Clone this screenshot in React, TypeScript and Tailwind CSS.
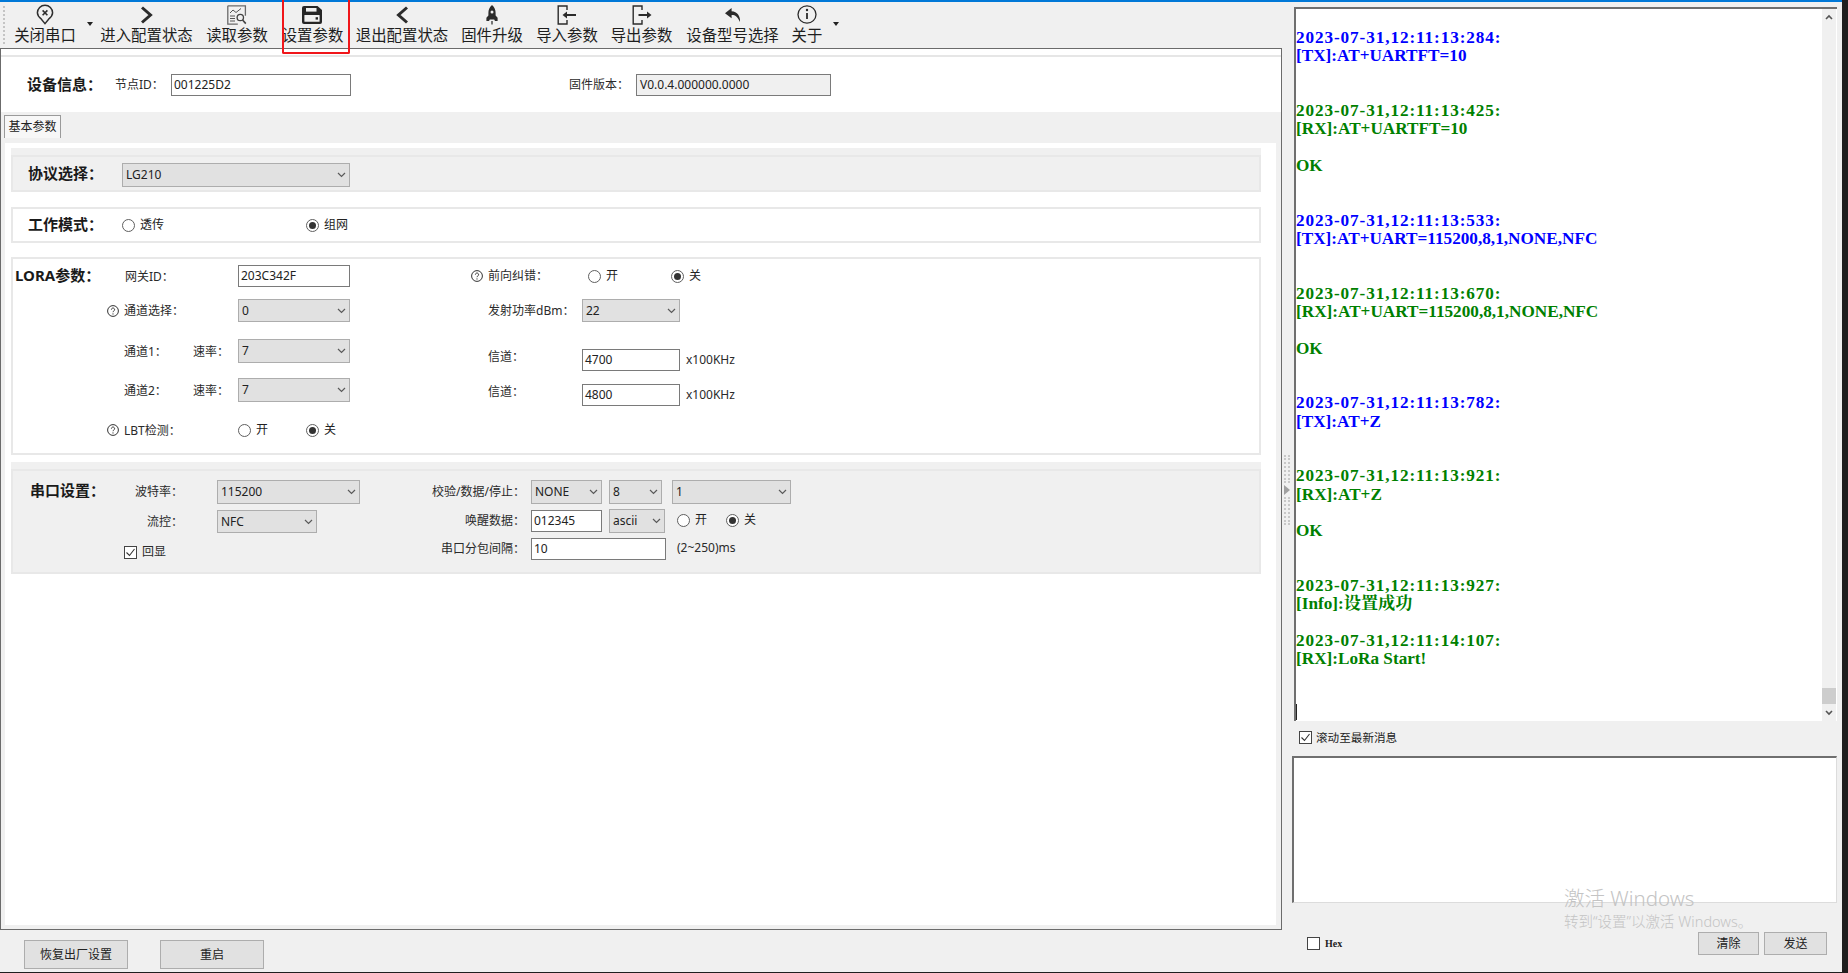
import React from "react";

const Chevron = ({ className = "" }: { className?: string }) => (
  <svg width="9" height="6" viewBox="0 0 9 6" className={className} fill="none" stroke="#5a5a5a" strokeWidth="1.2">
    <path d="M1 1l3.5 3.5L8 1" />
  </svg>
);

const Select = ({ value, className = "" }: { value: string; className?: string }) => (
  <div className={`flex items-center justify-between bg-[#e1e1e1] border border-[#adadad] pl-[3px] pr-[3px] text-[12px] leading-none text-[#222] shrink-0 ${className}`}>
    <span>{value}</span>
    <Chevron />
  </div>
);

const Field = ({ value, className = "", readOnly }: { value: string; className?: string; readOnly?: boolean }) => (
  <div className={`flex items-center border border-[#7a7a7a] pl-[2px] text-[12px] leading-none text-[#222] shrink-0 h-[22px] ${readOnly ? "bg-[#f0f0f0]" : "bg-white"} ${className}`}>
    {value}
  </div>
);

const Radio = ({ checked, label, className = "" }: { checked?: boolean; label: string; className?: string }) => (
  <div className={`flex items-center shrink-0 gap-[5px] text-[12px] leading-none text-[#222] ${className}`}>
    <span className="flex items-center justify-center w-[13px] h-[13px] rounded-full border border-[#5f5f5f] bg-white">
      {checked && <span className="block w-[7px] h-[7px] rounded-full bg-[#333]" />}
    </span>
    <span>{label}</span>
  </div>
);

const Check = ({ checked }: { checked?: boolean }) => (
  <span className="flex items-center justify-center w-[13px] h-[13px] border border-[#444] bg-white shrink-0">
    {checked && (
      <svg width="11" height="11" viewBox="0 0 11 11" fill="none" stroke="#333" strokeWidth="1.1">
        <path d="M1.5 5.5l3 3 5-6.5" />
      </svg>
    )}
  </span>
);

const Help = ({ className = "" }: { className?: string }) => (
  <svg width="12" height="12" viewBox="0 0 12 12" fill="none" stroke="#333" className={`shrink-0 ${className}`}>
    <circle cx="6" cy="6" r="5.4" strokeWidth="1" />
    <path d="M4.4 4.6a1.6 1.6 0 1 1 2.4 1.4c-.6.3-.8.7-.8 1.2" strokeWidth="1" />
    <circle cx="6" cy="8.900" r="0.6" fill="#333" stroke="none" />
  </svg>
);

const PinX = () => (
  <svg width="18" height="21" viewBox="0 0 18 21" fill="none" stroke="#2f2f2f" strokeWidth="1.5">
    <path d="M9 1.2a7.6 7.6 0 0 1 7.6 7.6c0 3-2.2 5-4 6.4L9 19.6l-3.6-4.4c-1.8-1.4-4-3.4-4-6.4A7.6 7.6 0 0 1 9 1.2z" />
    <path d="M6.6 6.4l4.8 4.8M11.4 6.4l-4.8 4.8" strokeWidth="1.6" />
  </svg>
);
const ChevR = () => (
  <svg width="13" height="18" viewBox="0 0 13 18" fill="none" stroke="#2b2b2b" strokeWidth="3">
    <path d="M2 1.5L10.5 9 2 16.5" />
  </svg>
);
const ChevL = () => (
  <svg width="13" height="18" viewBox="0 0 13 18" fill="none" stroke="#2b2b2b" strokeWidth="3">
    <path d="M11 1.5L2.5 9l8.5 7.5" />
  </svg>
);
const DocChart = () => (
  <svg width="20" height="20" viewBox="0 0 20 20" fill="none" stroke="#6a6a6a" strokeWidth="1">
    <path d="M.8 .8h17.6v10M.8 .8v18.4h10" strokeWidth="1.3" />
    <path d="M3 8l3-3 3 2.5 5-4" stroke="#555" />
    <path d="M3 11h5M3 13.5h5M3 16h5" stroke="#555" />
    <circle cx="13.3" cy="12.5" r="3.2" stroke="#444" strokeWidth="1.3" />
    <path d="M15.6 15l3.2 3.6" stroke="#444" strokeWidth="1.6" />
  </svg>
);
const Save = () => (
  <svg width="20" height="18" viewBox="0 0 20 18" className="-ml-[2px]">
    <path d="M2 0h13.5L20 4v12a2 2 0 0 1-2 2H2a2 2 0 0 1-2-2V2a2 2 0 0 1 2-2z" fill="#262626" />
    <rect x="4" y="2" width="10.5" height="3.6" fill="#f0f0f0" />
    <rect x="2.4" y="9" width="15.2" height="6.8" rx="0.6" fill="#f0f0f0" />
    <rect x="13.6" y="11.2" width="2.4" height="2.4" fill="#262626" />
  </svg>
);
const Rocket = () => (
  <svg width="12" height="20" viewBox="0 0 12 20">
    <path d="M6 0c2.6 2 3.6 5 3.6 8v2.6l2 2.2V16H9l-.8-1.4H3.800L3 16H.4v-3.200l2-2.200V8C2.4 5 3.400 2 6 0z" fill="#2b2b2b" />
    <circle cx="6" cy="7" r="1.5" fill="#f0f0f0" />
    <path d="M5.200 16h1.600v3.600H5.200z" fill="#555" />
  </svg>
);
const Door = ({ out }: { out?: boolean }) => (
  <svg width="20" height="20" viewBox="0 0 20 20" fill="none" stroke="#2b2b2b">
    <path d="M10 5V1H1.2v18H10v-4" strokeWidth="1.4" />
    {out ? (
      <>
        <path d="M6.5 10H16" strokeWidth="2" />
        <path d="M15 6.5l4.5 3.5-4.5 3.500z" fill="#2b2b2b" stroke="none" />
      </>
    ) : (
      <>
        <path d="M9 10h10" strokeWidth="2" />
        <path d="M10 6.5L5.500 10l4.500 3.500z" fill="#2b2b2b" stroke="none" />
      </>
    )}
  </svg>
);
const Reply = () => (
  <svg width="16" height="14" viewBox="0 0 16 14">
    <path d="M6.6 0L0 5.2l6.6 5V7c3.200-.2 6 1.600 8.400 7 .6-5.800-2.800-10.600-8.400-10.800z" fill="#2b2b2b" />
  </svg>
);
const Info = () => (
  <svg width="20" height="19" viewBox="0 0 20 19" fill="none" stroke="#2b2b2b">
    <ellipse cx="10" cy="9.500" rx="9" ry="8.700" strokeWidth="1.3" />
    <path d="M10 8v6" strokeWidth="1.8" />
    <circle cx="10" cy="5" r="1.200" fill="#2b2b2b" stroke="none" />
  </svg>
);

const Tool = ({ icon, label, className = "", children }: { icon: React.ReactNode; label: string; className?: string; children?: React.ReactNode }) => (
  <div className={`relative flex flex-col items-center shrink-0 ${className}`}>
    <div className="h-[25px] flex items-center justify-center">{icon}</div>
    <div className="whitespace-nowrap text-[15.4px] leading-[18px] text-[#1e1e1e]">{label}</div>
    {children}
  </div>
);

const Caret = ({ className = "" }: { className?: string }) => (
  <svg width="6" height="4" viewBox="0 0 6 4" className={`shrink-0 mt-[20px] ${className}`}>
    <path d="M0 0h6L3 4z" fill="#222" />
  </svg>
);

const H = ({ children, className = "" }: { children: React.ReactNode; className?: string }) => (
  <div className={`shrink-0 whitespace-nowrap text-[15px] font-bold leading-none text-[#1a1a1a] ${className}`}>{children}</div>
);
const L = ({ children, className = "" }: { children: React.ReactNode; className?: string }) => (
  <div className={`shrink-0 whitespace-nowrap text-[12px] leading-none text-[#2a2a2a] ${className}`}>{children}</div>
);

type Tone = "b" | "g" | "";
const D = "2023-07-31,12:11:";
const log: [string, Tone][] = [
  [D + "13:284:", "b"], ["[TX]:AT+UARTFT=10", "b"], ["", ""], ["", ""],
  [D + "13:425:", "g"], ["[RX]:AT+UARTFT=10", "g"], ["", ""], ["OK", "g"], ["", ""], ["", ""],
  [D + "13:533:", "b"], ["[TX]:AT+UART=115200,8,1,NONE,NFC", "b"], ["", ""], ["", ""],
  [D + "13:670:", "g"], ["[RX]:AT+UART=115200,8,1,NONE,NFC", "g"], ["", ""], ["OK", "g"], ["", ""], ["", ""],
  [D + "13:782:", "b"], ["[TX]:AT+Z", "b"], ["", ""], ["", ""],
  [D + "13:921:", "g"], ["[RX]:AT+Z", "g"], ["", ""], ["OK", "g"], ["", ""], ["", ""],
  [D + "13:927:", "g"], ["[Info]:设置成功", "g"], ["", ""],
  [D + "14:107:", "g"], ["[RX]:LoRa Start!", "g"],
];

export default function App() {
  return (
    <div className="w-[1848px] h-[973px] bg-[#1f1f1f] overflow-hidden [font-family:'Noto_Sans','Noto_Sans_CJK_SC',sans-serif]">
      <div className="w-[1842px] h-[972px] bg-[#f0f0f0] border-t-2 border-[#0078d7] flex">
        {/* left column */}
        <div className="w-[1282px] shrink-0 flex flex-col">
          {/* toolbar */}
          <div className="h-[46px] flex items-start shrink-0">
            <div className="ml-[3px] mt-[4px] w-[2px] h-[38px] border-l-2 border-dotted border-[#c4c4c4] shrink-0" />
            <Tool className="ml-[9px] w-[62px]" icon={<PinX />} label="关闭串口" />
            <Caret className="ml-[11px]" />
            <Tool className="ml-[7px] w-[93px]" icon={<ChevR />} label="进入配置状态" />
            <Tool className="ml-[13px] w-[62px]" icon={<DocChart />} label="读取参数" />
            <Tool className="ml-[14px] w-[61px]" icon={<Save />} label="设置参数">
              <div className="absolute left-[0px] top-[-2px] w-[68px] h-[54px] border-2 border-t-0 border-[#f0161a] rounded-b-[2px]" />
            </Tool>
            <Tool className="ml-[13px] w-[92px]" icon={<ChevL />} label="退出配置状态" />
            <Tool className="ml-[13px] w-[62px]" icon={<Rocket />} label="固件升级" />
            <Tool className="ml-[13px] w-[62px]" icon={<Door />} label="导入参数" />
            <Tool className="ml-[13px] w-[61px]" icon={<Door out />} label="导出参数" />
            <Tool className="ml-[15px] w-[91px]" icon={<Reply />} label="设备型号选择" />
            <Tool className="ml-[14px] w-[30px]" icon={<Info />} label="关于" />
            <Caret className="ml-[11px]" />
          </div>

          {/* main panel */}
          <div className="h-[882px] shrink-0 border border-[#6b6b6b] bg-[#f0f0f0] flex flex-col">
            <div className="h-[8px] bg-white border-b-2 border-[#e6e6e6] shrink-0" />
            <div className="h-[55px] bg-white flex items-center shrink-0 pl-[26px]">
              <H className="w-[88px]">设备信息：</H>
              <L className="w-[56px]">节点ID：</L>
              <Field value="001225D2" className="w-[180px]" />
              <L className="ml-[218px] w-[67px]">固件版本：</L>
              <Field value="V0.0.4.000000.0000" className="w-[195px] pl-[3px]" readOnly />
            </div>
            <div className="h-[31px] shrink-0 pl-[3px] pt-[3px]">
              <div className="w-[57px] h-[23px] flex items-center justify-center border-l border-t border-r border-[#9a9a9a] bg-[#f7f7f7] text-[12px] leading-none text-[#222]">
                基本参数
              </div>
            </div>

            {/* tab page */}
            <div className="ml-[4px] w-[1271px] h-[782px] bg-white pl-[6px] shrink-0">
              <div className="w-[1250px] pt-[5px]">
                <div className="h-[7px] bg-[#f0f0f0]" />
                {/* protocol */}
                <div className="h-[37px] border-2 border-[#e8e8e8] bg-[#f0f0f0] flex items-center pl-[15px]">
                  <H className="w-[94px]">协议选择：</H>
                  <Select value="LG210" className="w-[228px] h-[24px] mt-[2px]" />
                </div>
                {/* mode */}
                <div className="mt-[15px] h-[36px] border-2 border-[#e8e8e8] flex items-center pl-[15px]">
                  <H className="w-[94px] -mt-[1px]">工作模式：</H>
                  <Radio label="透传" className="w-[184px]" />
                  <Radio label="组网" checked />
                </div>
                {/* lora */}
                <div className="mt-[14px] h-[198px] border-2 border-[#e8e8e8] flex pt-[6px]">
                  <div className="w-[337px] shrink-0 flex flex-col">
                    <div className="h-[22px] flex items-center pl-[2px]">
                      <H className="w-[110px] -mt-[2px]">LORA参数：</H>
                      <L className="w-[113px] mt-[2px]">网关ID：</L>
                      <Field value="203C342F" className="w-[112px]" />
                    </div>
                    <div className="mt-[12px] h-[23px] flex items-center pl-[94px]">
                      <Help className="mr-[5px]" />
                      <L className="w-[114px]">通道选择：</L>
                      <Select value="0" className="w-[112px] h-[23px]" />
                    </div>
                    <div className="mt-[17px] h-[24px] flex items-center pl-[111px]">
                      <L className="w-[69px] mt-[2px]">通道1：</L>
                      <L className="w-[45px] mt-[2px]">速率：</L>
                      <Select value="7" className="w-[112px] h-[24px]" />
                    </div>
                    <div className="mt-[15px] h-[24px] flex items-center pl-[111px]">
                      <L className="w-[69px] mt-[2px]">通道2：</L>
                      <L className="w-[45px] mt-[2px]">速率：</L>
                      <Select value="7" className="w-[112px] h-[24px]" />
                    </div>
                    <div className="mt-[21px] h-[14px] flex items-center pl-[94px]">
                      <Help className="mr-[5px]" />
                      <L className="w-[114px] mt-[2px]">LBT检测：</L>
                      <Radio label="开" className="w-[68px]" />
                      <Radio label="关" checked />
                    </div>
                  </div>
                  <div className="flex flex-col">
                    <div className="h-[22px] flex items-center pl-[121px]">
                      <Help className="mr-[5px]" />
                      <L className="w-[100px]">前向纠错：</L>
                      <Radio label="开" className="w-[83px]" />
                      <Radio label="关" checked />
                    </div>
                    <div className="mt-[12px] h-[23px] flex items-center pl-[138px]">
                      <L className="w-[94px]">发射功率dBm：</L>
                      <Select value="22" className="w-[98px] h-[23px]" />
                    </div>
                    <div className="mt-[27px] h-[22px] flex items-center pl-[138px]">
                      <L className="w-[94px] -mt-[6px]">信道：</L>
                      <Field value="4700" className="w-[98px]" />
                      <L className="ml-[6px]">x100KHz</L>
                    </div>
                    <div className="mt-[13px] h-[22px] flex items-center pl-[138px]">
                      <L className="w-[94px] -mt-[6px]">信道：</L>
                      <Field value="4800" className="w-[98px]" />
                      <L className="ml-[6px]">x100KHz</L>
                    </div>
                  </div>
                </div>
                {/* serial */}
                <div className="mt-[7px] h-[7px] bg-[#f0f0f0]" />
                <div className="h-[105px] border-2 border-[#e8e8e8] bg-[#f0f0f0] flex pt-[9px]">
                  <div className="w-[347px] shrink-0 flex flex-col">
                    <div className="h-[24px] flex items-center pl-[17px]">
                      <H className="w-[105px] -mt-[4px]">串口设置：</H>
                      <L className="w-[82px]">波特率：</L>
                      <Select value="115200" className="w-[143px] h-[24px]" />
                    </div>
                    <div className="mt-[6px] h-[23px] flex items-center pl-[134px]">
                      <L className="w-[70px]">流控：</L>
                      <Select value="NFC" className="w-[100px] h-[23px]" />
                    </div>
                    <div className="mt-[12px] h-[14px] flex items-center pl-[111px] gap-[5px]">
                      <Check checked />
                      <L>回显</L>
                    </div>
                  </div>
                  <div className="flex flex-col">
                    <div className="h-[24px] flex items-center">
                      <L className="w-[165px] text-right">校验/数据/停止：</L>
                      <Select value="NONE" className="ml-[6px] w-[71px] h-[24px]" />
                      <Select value="8" className="ml-[7px] w-[53px] h-[24px]" />
                      <Select value="1" className="ml-[10px] w-[119px] h-[24px]" />
                    </div>
                    <div className="mt-[6px] h-[22px] flex items-center">
                      <L className="w-[165px] text-right">唤醒数据：</L>
                      <Field value="012345" className="ml-[6px] w-[71px]" />
                      <Select value="ascii" className="ml-[7px] w-[56px] h-[24px] -mt-[1px]" />
                      <Radio label="开" className="ml-[12px] w-[49px] -mt-[2px]" />
                      <Radio label="关" checked className="-mt-[2px]" />
                    </div>
                    <div className="mt-[6px] h-[22px] flex items-center">
                      <L className="w-[165px] text-right">串口分包间隔：</L>
                      <Field value="10" className="ml-[6px] w-[135px]" />
                      <L className="ml-[11px] -mt-[2px]">(2~250)ms</L>
                    </div>
                  </div>
                </div>
              </div>
            </div>
          </div>

          {/* bottom buttons */}
          <div className="flex-1 flex items-start pl-[24px] pt-[10px]">
            <button className="w-[104px] h-[29px] bg-[#e1e1e1] border border-[#adadad] text-[12px] leading-none text-[#222]">恢复出厂设置</button>
            <button className="ml-[32px] w-[104px] h-[29px] bg-[#e1e1e1] border border-[#adadad] text-[12px] leading-none text-[#222]">重启</button>
          </div>
        </div>

        {/* splitter */}
        <div className="w-[10px] shrink-0 flex flex-col items-center pt-[453px]">
          <div className="w-[6px] h-[28px] border-x-2 border-dotted border-[#c8c8c8]" />
          <svg width="6" height="10" viewBox="0 0 6 10" className="my-[2px]">
            <path d="M0 0l6 5-6 5z" fill="#a0a0a0" />
          </svg>
          <div className="w-[6px] h-[28px] border-x-2 border-dotted border-[#c8c8c8]" />
        </div>

        {/* right column */}
        <div className="relative w-[550px] shrink-0 flex flex-col">
          <div className="ml-[2px] mt-[5px] w-[543px] h-[714px] shrink-0 bg-white border-t-2 border-l-2 border-[#6f6f6f] flex">
            <div className="flex-1 pt-[20px] [font-family:'Liberation_Serif','Noto_Serif_CJK_SC','Noto_Sans_CJK_SC',serif] font-bold text-[17.2px]">
              {log.map(([t, c], i) => (
                <div
                  key={i}
                  className={`h-[18.28px] leading-[18.28px] whitespace-pre ${c === "b" ? "text-[#0000ff]" : "text-[#008000]"} ${t.startsWith("2023") ? "tracking-[0.9px]" : ""}`}
                >
                  {t || "\u00a0"}
                </div>
              ))}
              <div className="mt-[36px] w-[1px] h-[16px] bg-[#222]" />
            </div>
            <div className="w-[14px] shrink-0 bg-[#f0f0f0] mr-[1px] flex flex-col items-center">
              <svg width="8" height="6" viewBox="0 0 8 6" className="mt-[5px]" fill="none" stroke="#555" strokeWidth="1.6">
                <path d="M1 5l3-3 3 3" />
              </svg>
              <div className="flex-1" />
              <div className="w-full h-[16px] bg-[#cdcdcd]" />
              <svg width="8" height="6" viewBox="0 0 8 6" className="mt-[6px] mb-[5px]" fill="none" stroke="#555" strokeWidth="1.6">
                <path d="M1 1l3 3 3-3" />
              </svg>
            </div>
          </div>
          <div className="h-[35px] shrink-0 flex items-center pl-[7px] gap-[4px] pb-[2px]">
            <Check checked />
            <span className="text-[11.6px] leading-none text-[#222]">滚动至最新消息</span>
          </div>
          <div className="w-[545px] h-[147px] shrink-0 bg-white border-t-2 border-l-2 border-r border-b border-t-[#6f6f6f] border-l-[#6f6f6f] border-r-[#dcdcdc] border-b-[#dcdcdc]" />
          <div className="mt-[29px] flex items-center pl-[15px] pr-[15px]">
            <Check />
            <span className="ml-[5px] [font-family:'Liberation_Serif',serif] font-bold text-[10px] leading-none text-[#222]">Hex</span>
            <button className="ml-auto w-[61px] h-[23px] bg-[#e1e1e1] border border-[#adadad] text-[12px] leading-none text-[#222]">清除</button>
            <button className="ml-[5px] w-[63px] h-[23px] bg-[#e1e1e1] border border-[#adadad] text-[12px] leading-none text-[#222]">发送</button>
          </div>
          {/* activation watermark */}
          <div className="absolute left-[272px] top-[883px] text-[#c4c4c4] pointer-events-none whitespace-nowrap">
            <div className="text-[20.5px] leading-[26px] font-light">激活 Windows</div>
            <div className="text-[14.5px] leading-[20px] font-light">转到“设置”以激活 Windows。</div>
          </div>
        </div>
      </div>
    </div>
  );
}
